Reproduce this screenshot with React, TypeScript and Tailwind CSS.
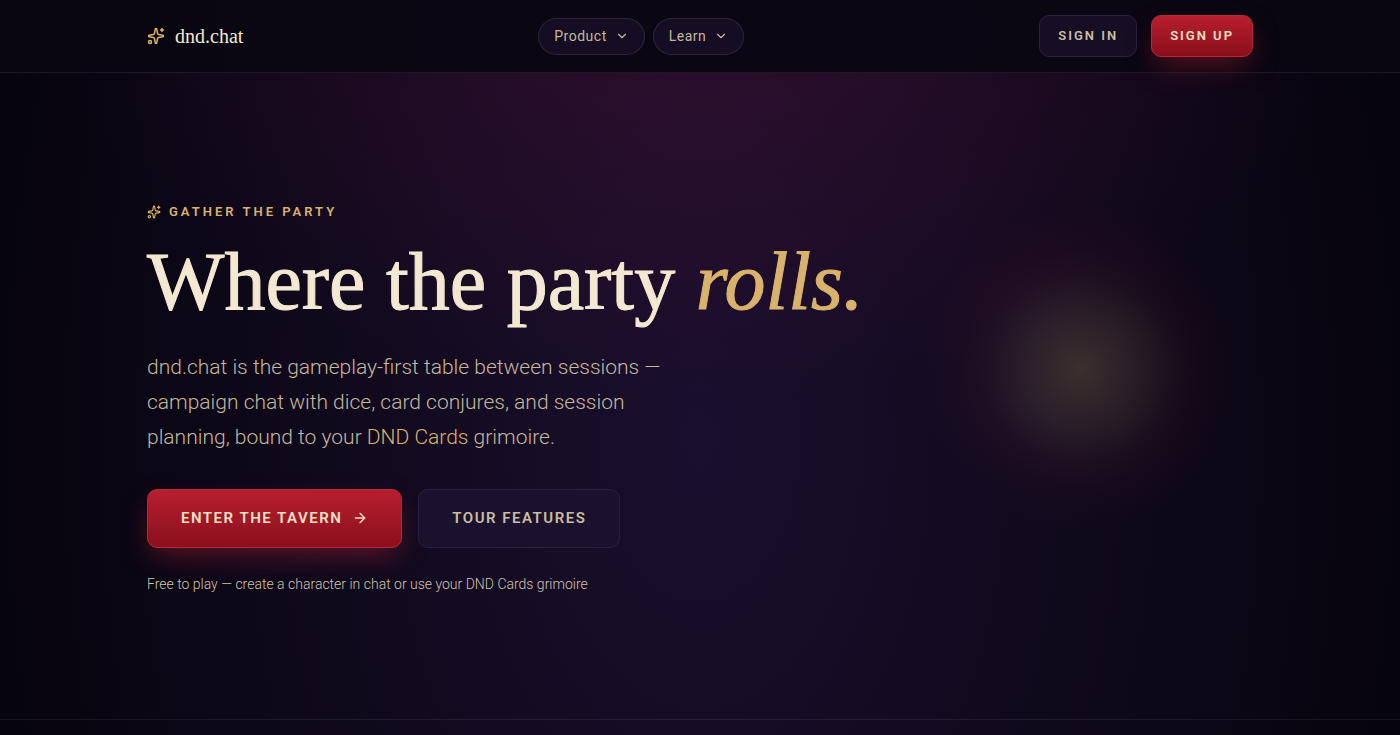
import { ArrowRight, ChevronDown, Sparkles } from 'lucide-react';

const menus = ["Product", "Learn"];

function Header() {
  return (
    <header className="border-b border-white/8 bg-[#0a0612]/95">
      <div className="mx-auto flex h-18 max-w-[1170px] items-center justify-between px-8">
        <a href="#" className="flex items-center gap-2.5 text-[#f3e9d2]">
          <Sparkles size={18} className="text-[#d9b36c]" />
          <span className="font-['Liberation_Serif',serif] text-[20px] leading-6">dnd.chat</span>
        </a>

        <nav className="flex gap-2">
          {menus.map((menu) => (
            <button
              key={menu}
              type="button"
              className="flex h-[37px] items-center gap-2 rounded-full border border-white/10 bg-[#150d24] px-[15px] text-[14px] tracking-[0.5px] text-[#c4b89e]"
            >
              {menu}
              <ChevronDown size={14} />
            </button>
          ))}
        </nav>

        <div className="flex gap-3.5">
          <button
            type="button"
            className="h-[42px] rounded-[10px] border border-[#2a2140] bg-[#160e24] px-[18px] text-[13px] font-semibold tracking-[2px] text-[#c9bda3]"
          >
            SIGN IN
          </button>
          <button
            type="button"
            className="h-[42px] rounded-[10px] border border-[#b02a3c] bg-linear-to-b from-[#b81f30] to-[#8b0f1c] px-[18px] text-[13px] font-semibold tracking-[2px] text-[#f3e0c6] shadow-[0_12px_28px_-6px_rgba(184,31,48,0.5)]"
          >
            SIGN UP
          </button>
        </div>
      </div>
    </header>
  )
}

function Hero() {
  return (
    <section className="flex min-h-[88vh] items-center border-b border-white/8 pt-1.5">
      <div className="relative mx-auto w-full max-w-[1170px] px-8">
        {/* lantern glow */}
        <div className="pointer-events-none absolute top-1/2 right-[45px] size-[320px] -translate-y-[190px] rounded-full bg-[radial-gradient(circle_closest-side,rgba(215,180,110,0.22)_0%,rgba(190,150,110,0.15)_35%,rgba(160,80,70,0.09)_58%,rgba(140,25,40,0.06)_75%,transparent_100%)]" />

        <div className="relative">
          <p className="flex items-center gap-2 text-[13px] leading-5 font-semibold tracking-[3px] text-[#d9b36c]">
            <Sparkles size={14} />
            GATHER THE PARTY
          </p>
          <h1 className="mt-4 font-['Liberation_Serif',serif] text-[82px] leading-[88px] text-[#f3e9d2] [-webkit-text-stroke:1px_currentColor]">
            Where the party <em className="text-[#d9b36c]">rolls.</em>
          </h1>
          <p className="mt-6 max-w-[540px] text-[21px] leading-[35px] font-light text-[#c4b89e]">
            dnd.chat is the gameplay-first table between sessions — campaign chat with dice, card conjures, and session planning, bound to your <a href="#" className="text-[#d9b36c]">DND Cards</a> grimoire.
          </p>
          <div className="mt-[34px] flex gap-4">
            <button
              type="button"
              className="flex h-[59px] items-center gap-2.5 rounded-[10px] border border-[#b02a3c] bg-linear-to-b from-[#b81f30] to-[#8b0f1c] px-[33px] text-[15px] font-semibold tracking-[1.5px] text-[#f3e0c6] shadow-[0_12px_28px_-6px_rgba(184,31,48,0.5)]"
            >
              ENTER THE TAVERN
              <ArrowRight size={16} />
            </button>
            <button
              type="button"
              className="h-[59px] rounded-[10px] border border-[#2a2140] bg-[#1a112c] px-[33px] text-[15px] font-semibold tracking-[1.5px] text-[#c9bda3]"
            >
              TOUR FEATURES
            </button>
          </div>
          <p className="mt-6 text-[14px] leading-6 font-light text-[#d0c5ad]">
            Free to play — create a character in chat or use your DND Cards grimoire
          </p>
        </div>
      </div>
    </section>
  )
}

function App() {
  return (
    <div className="min-h-screen bg-[#06040d] bg-[radial-gradient(ellipse_46%_400px_at_50%_0,rgba(105,20,70,0.32),transparent),radial-gradient(ellipse_52%_1200px_at_50%_440px,#1a0f2d,transparent)] font-['Roboto',sans-serif]">
      <Header />
      <Hero />
    </div>
  )
}

export default App
